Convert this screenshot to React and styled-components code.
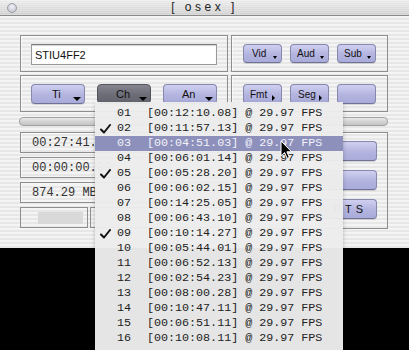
import React from "react";
import styled, { createGlobalStyle, css } from "styled-components";

const Global = createGlobalStyle`
  html, body { margin: 0; padding: 0; background: #000; }
  body { font-family: "Liberation Sans", Arial, sans-serif; }
`;

const Page = styled.div`
  position: relative;
  width: 409px;
  height: 350px;
  overflow: hidden;
  background: #000;
`;

const Window = styled.div`
  height: 248px;
  display: flex;
  flex-direction: column;
  background: repeating-linear-gradient(to bottom, #f4f4f4 0 2px, #e7e7e7 2px 4px);
`;

const TitleBar = styled.div`
  position: relative;
  height: 15px;
  border-bottom: 1px solid #8a8a8a;
  background: repeating-linear-gradient(to bottom, rgba(255,255,255,0.25) 0 1px, rgba(0,0,0,0) 1px 2px),
    linear-gradient(#ececec, #cfcfcf);
  display: flex;
  align-items: center;
  justify-content: center;
`;

const CloseDot = styled.span`
  position: absolute;
  left: 7px;
  top: 3px;
  width: 8px;
  height: 8px;
  border-radius: 50%;
  border: 1px solid #9a9ca8;
  background: radial-gradient(circle at 50% 35%, #f2f2f6, #b9bbc7);
`;

const Title = styled.span`
  font-size: 12px;
  letter-spacing: 3.5px;
  color: #222;
  line-height: 15px;
`;

const Content = styled.div`
  padding: 19px 21px 0 20px;
  display: flex;
  flex-direction: column;
`;

const Row = styled.div`
  display: grid;
  grid-template-columns: 208px 157px;
  column-gap: 3px;
  margin-bottom: ${(p) => p.$mb || 0}px;
`;

const GroupBox = styled.div`
  box-sizing: border-box;
  height: ${(p) => p.$h || 37}px;
  border: 1px solid #8e8e8e;
  box-shadow: inset 1px 1px 0 rgba(255,255,255,0.6);
  padding: 8px ${(p) => p.$px || 10}px 0;
  display: flex;
  flex-direction: ${(p) => (p.$col ? "column" : "row")};
  gap: ${(p) => p.$gap || 0}px;
`;

const TextField = styled.div`
  box-sizing: border-box;
  width: 187px;
  height: 21px;
  background: #fff;
  border: 1px solid #999;
  border-top-color: #7a7a7a;
  box-shadow: inset 0 1px 1px rgba(0,0,0,0.18);
  font-size: 11px;
  color: #111;
  padding-left: 3px;
  display: flex;
  align-items: center;
`;

const Button = styled.div`
  position: relative;
  box-sizing: border-box;
  width: ${(p) => p.$w || 39}px;
  height: ${(p) => p.$h || 19}px;
  border-radius: 4px;
  border: 1px solid #8688ad;
  border-bottom-color: #6f7196;
  background: linear-gradient(#cfd0f0, #b3b4df 55%, #a9abd9);
  box-shadow: 0 1px 0 rgba(0,0,0,0.12);
  font-size: ${(p) => p.$fs || 11}px;
  color: #111;
  display: flex;
  align-items: center;
  justify-content: ${(p) => (p.$end ? "flex-end" : "flex-start")};
  padding-left: ${(p) => p.$pl || 0}px;
  padding-right: ${(p) => p.$pr || 0}px;
  letter-spacing: ${(p) => p.$ls || 0}px;
  ${(p) =>
    p.$pressed &&
    css`
      border-color: #55555f;
      background: linear-gradient(#85858f, #6c6c77 55%, #65656f);
    `}
`;

const ArrowDown = styled.span`
  position: absolute;
  right: ${(p) => p.$r}px;
  bottom: ${(p) => p.$b}px;
  width: 0;
  height: 0;
  border-left: ${(p) => p.$s}px solid transparent;
  border-right: ${(p) => p.$s}px solid transparent;
  border-top: ${(p) => p.$t}px solid #000;
`;

const ArrowRight = styled.span`
  position: absolute;
  right: 6px;
  bottom: 2px;
  width: 0;
  height: 0;
  border-top: 3px solid transparent;
  border-bottom: 3px solid transparent;
  border-left: 3px solid #000;
`;

const Progress = styled.div`
  box-sizing: border-box;
  margin-left: -1px;
  height: 9px;
  border-radius: 4px;
  border: 1px solid #a2a2a2;
  background: linear-gradient(#e9e9e9, #d4d4d4 50%, #c4c4c4);
  margin-bottom: 6px;
`;

const Column = styled.div`
  display: flex;
  flex-direction: column;
  gap: 4px;
`;

const Field = styled.div`
  box-sizing: border-box;
  height: 21px;
  border: 1px solid #8e8e8e;
  box-shadow: inset 1px 1px 0 rgba(255,255,255,0.6);
  display: flex;
  align-items: center;
  padding-left: 11px;
  font-family: "Liberation Mono", "DejaVu Sans Mono", monospace;
  font-size: 12px;
  color: #333;
  white-space: pre;
`;

const SmallRow = styled.div`
  display: grid;
  grid-template-columns: 68px 68px 68px;
  column-gap: 2px;
`;

const SmallBox = styled.div`
  box-sizing: border-box;
  height: 21px;
  border: 1px solid #8e8e8e;
  display: flex;
  align-items: center;
  justify-content: flex-end;
  padding-right: 4px;
`;

const Blank = styled.div`
  width: 45px;
  height: 12px;
  background: #d9d9d9;
`;

const Menu = styled.div`
  position: absolute;
  left: 95px;
  top: 102px;
  width: 248px;
  height: 260px;
  padding-top: 4px;
  box-sizing: border-box;
  background: rgba(236, 236, 236, 0.97);
  box-shadow: 0 2px 4px rgba(0,0,0,0.25);
  font-family: "Liberation Mono", "DejaVu Sans Mono", monospace;
  font-size: 11.7px;
`;

const Item = styled.div`
  height: 15px;
  line-height: 15px;
  display: grid;
  grid-template-columns: 22px 30px auto;
  white-space: pre;
  color: ${(p) => (p.$active ? "#f2f2fa" : "#222")};
  background: ${(p) => (p.$active ? "#8c90bb" : "transparent")};
`;

const CheckCell = styled.span`
  display: flex;
  align-items: center;
  padding-left: 5px;
`;

const Cursor = styled.svg`
  position: absolute;
  left: 280px;
  top: 140px;
`;

const items = [
  ["01", "00:12:10.08"],
  ["02", "00:11:57.13", true],
  ["03", "00:04:51.03", false, true],
  ["04", "00:06:01.14"],
  ["05", "00:05:28.20", true],
  ["06", "00:06:02.15"],
  ["07", "00:14:25.05"],
  ["08", "00:06:43.10"],
  ["09", "00:10:14.27", true],
  ["10", "00:05:44.01"],
  ["11", "00:06:52.13"],
  ["12", "00:02:54.23"],
  ["13", "00:08:00.28"],
  ["14", "00:10:47.11"],
  ["15", "00:06:51.11"],
  ["16", "00:10:08.11"],
];

const Check = () => (
  <svg width="11" height="10" viewBox="0 0 11 10">
    <path d="M1 5.5 L4 8.5 L10 1" fill="none" stroke="#111" strokeWidth="2" strokeLinecap="round" strokeLinejoin="round" />
  </svg>
);

export default function App() {
  return (
    <Page>
      <Global />
      <Window>
        <TitleBar>
          <CloseDot />
          <Title>[ osex ]</Title>
        </TitleBar>
        <Content>
          <Row $mb={3}>
            <GroupBox>
              <TextField>STIU4FF2</TextField>
            </GroupBox>
            <GroupBox $px={11} $gap={8}>
              <Button $pl={8} $fs={10}>Vid<ArrowDown $s={2.5} $t={3} $r={4} $b={3} /></Button>
              <Button $pl={6} $fs={10}>Aud<ArrowDown $s={2.5} $t={3} $r={4} $b={3} /></Button>
              <Button $pl={6} $fs={10}>Sub<ArrowDown $s={2.5} $t={3} $r={4} $b={3} /></Button>
            </GroupBox>
          </Row>
          <Row $mb={5}>
            <GroupBox $gap={12}>
              <Button $w={54} $h={20} $pl={20}>Ti<ArrowDown $s={4} $t={4} $r={3} $b={2} /></Button>
              <Button $w={54} $h={20} $pl={18} $pressed>Ch<ArrowDown $s={4} $t={4} $r={3} $b={2} /></Button>
              <Button $w={54} $h={20} $pl={18}>An<ArrowDown $s={4} $t={4} $r={3} $b={2} /></Button>
            </GroupBox>
            <GroupBox $px={11} $gap={8}>
              <Button $h={20} $pl={6} $fs={10}>Fmt<ArrowRight /></Button>
              <Button $h={20} $pl={7} $fs={10}>Seg<ArrowRight /></Button>
              <Button $h={20} />
            </GroupBox>
          </Row>
          <Progress />
          <Row>
            <Column>
              <Field>00:27:41.00</Field>
              <Field>00:00:00.00</Field>
              <Field>874.29 MB</Field>
              <SmallRow>
                <SmallBox><Blank /></SmallBox>
                <SmallBox />
                <SmallBox />
              </SmallRow>
            </Column>
            <GroupBox $h={97} $px={11} $col $gap={9}>
              <Button $w={134} $h={20} />
              <Button $w={134} $h={20} />
              <Button $w={134} $h={20} $end $pr={9} $ls={4}>PTS</Button>
            </GroupBox>
          </Row>
        </Content>
      </Window>
      <Menu>
        {items.map(([n, t, checked, active]) => (
          <Item key={n} $active={active}>
            <CheckCell>{checked ? <Check /> : null}</CheckCell>
            <span>{n}</span>
            <span>{`[${t}] @ 29.97 FPS`}</span>
          </Item>
        ))}
      </Menu>
      <Cursor width="13" height="20" viewBox="0 0 13 20">
        <path d="M1 1 L1 16 L4.6 12.6 L7.2 18.4 L9.4 17.4 L6.9 11.8 L11.6 11.8 Z" fill="#000" stroke="#fff" strokeWidth="1" strokeLinejoin="round" />
      </Cursor>
    </Page>
  );
}
